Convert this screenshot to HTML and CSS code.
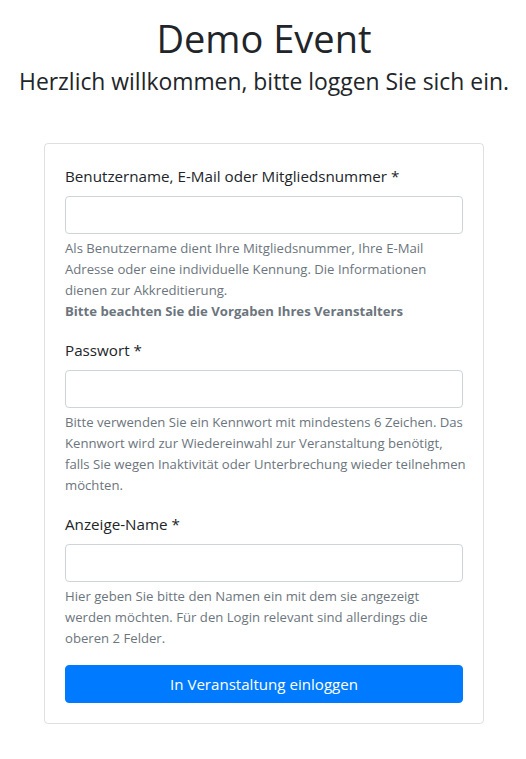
FILE: index.html
```html
<!DOCTYPE html>
<html lang="de">
<head>
<meta charset="utf-8">
<title>Demo Event</title>
<link rel="stylesheet" href="styles.css">
</head>
<body>
<main class="page">
  <header class="intro">
    <h1 class="title">Demo Event</h1>
    <h4 class="subtitle">Herzlich willkommen, bitte loggen Sie sich ein.</h4>
  </header>
  <form class="card">
    <div class="form-group">
      <label class="label" for="user">Benutzername, E-Mail oder Mitgliedsnummer *</label>
      <input class="input" id="user" type="text">
      <small class="help">Als Benutzername dient Ihre Mitgliedsnummer, Ihre E-Mail<br>Adresse oder eine individuelle Kennung. Die Informationen<br>dienen zur Akkreditierung.<br><b>Bitte beachten Sie die Vorgaben Ihres Veranstalters</b></small>
    </div>
    <div class="form-group">
      <label class="label" for="pw">Passwort *</label>
      <input class="input" id="pw" type="password">
      <small class="help">Bitte verwenden Sie ein Kennwort mit mindestens 6 Zeichen. Das<br>Kennwort wird zur Wiedereinwahl zur Veranstaltung benötigt,<br>falls Sie wegen Inaktivität oder Unterbrechung wieder teilnehmen<br>möchten.</small>
    </div>
    <div class="form-group">
      <label class="label" for="name">Anzeige-Name *</label>
      <input class="input" id="name" type="text">
      <small class="help">Hier geben Sie bitte den Namen ein mit dem sie angezeigt<br>werden möchten. Für den Login relevant sind allerdings die<br>oberen 2 Felder.</small>
    </div>
    <button class="btn" type="button">In Veranstaltung einloggen</button>
  </form>
</main>
</body>
</html>
```
FILE: styles.css
```css
* { box-sizing: border-box; }
html, body { margin: 0; padding: 0; background: #fff; }
body {
  font-family: "Open Sans", "Noto Sans", "Liberation Sans", sans-serif;
  color: #212529;
  font-size: 15.2px;
  line-height: 1.5;
}
.page {
  display: flex;
  flex-direction: column;
  align-items: center;
  padding: 14px 0 0 2px;
}
.intro { text-align: center; }
.title {
  margin: 0 0 6px;
  font-size: 38px;
  font-weight: 400;
  line-height: 48px;
}
.subtitle {
  margin: 0;
  font-size: 22.9px;
  font-weight: 400;
  line-height: 28px;
}
.card {
  margin-top: 47px;
  width: 440px;
  border: 1px solid rgba(0,0,0,.125);
  border-radius: 4px;
  padding: 20px;
  display: flex;
  flex-direction: column;
}
.form-group {
  display: flex;
  flex-direction: column;
  margin-bottom: 16px;
}
.label {
  font-size: 15.2px;
  line-height: 24px;
  margin-bottom: 8px;
}
.input {
  height: 38px;
  border: 1px solid #ced4da;
  border-radius: 4px;
  padding: 6px 12px;
  font: inherit;
}
.help {
  margin-top: 4px;
  font-size: 13.15px;
  line-height: 21px;
  color: #6c757d;
  white-space: nowrap;
}
.help b { font-weight: 700; }
.btn {
  height: 38px;
  border: 1px solid #007bff;
  background: #007bff;
  color: #fff;
  border-radius: 4px;
  font: inherit;
  font-size: 15.1px;
}
```
